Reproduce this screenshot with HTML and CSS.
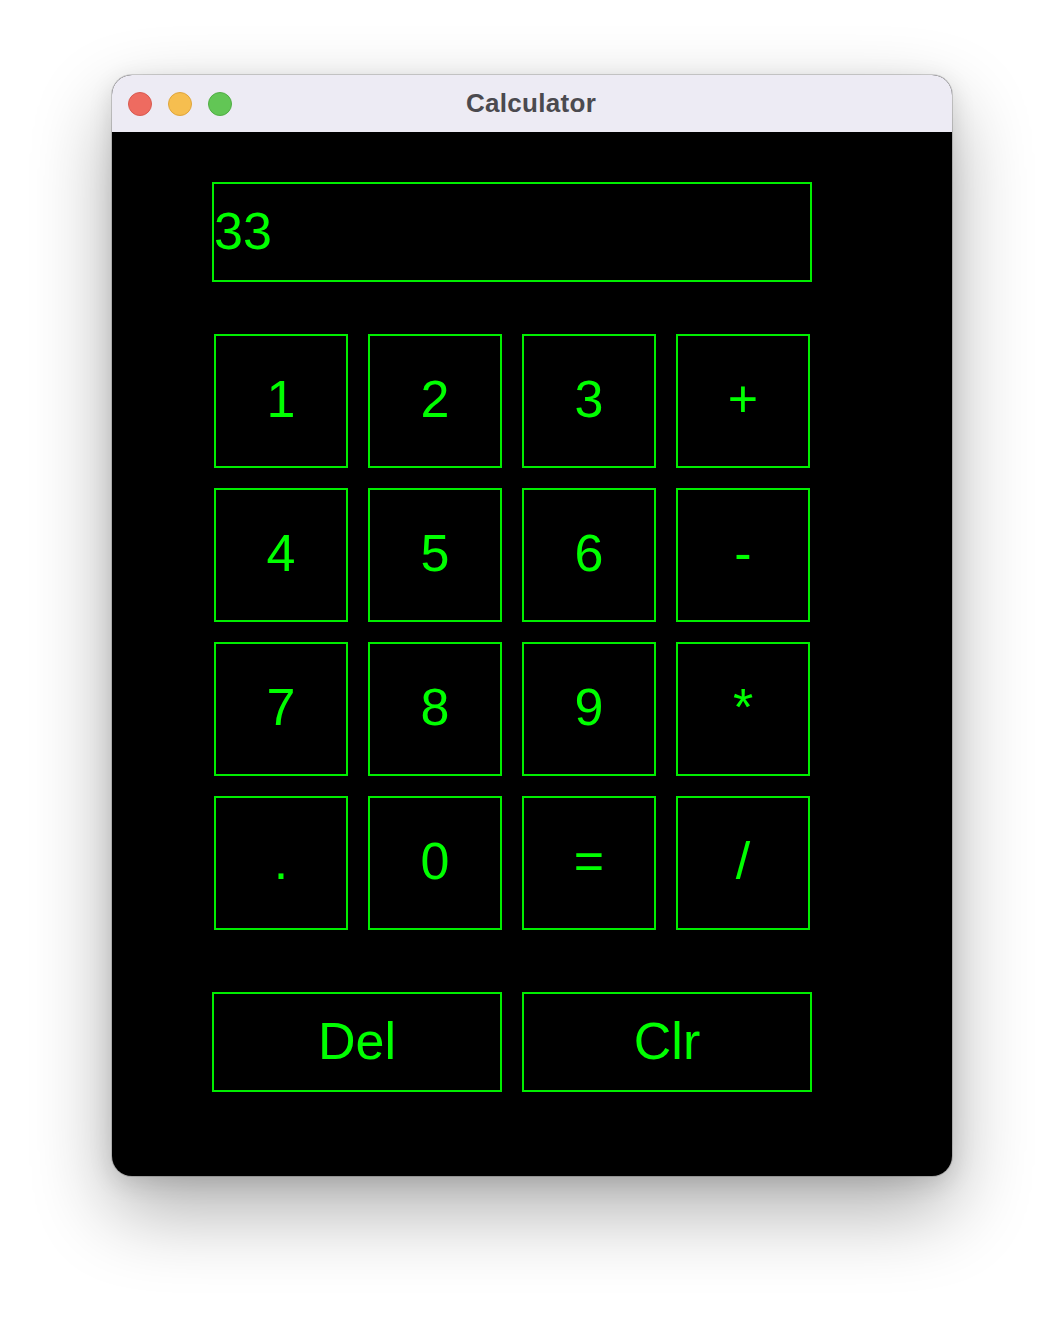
FILE: index.html
```html
<!DOCTYPE html>
<html>
<head>
<meta charset="utf-8">
<title>Calculator</title>
<link rel="stylesheet" href="styles.css">
</head>
<body>
<div class="window">
  <div class="titlebar">
    <div class="lights">
      <span class="light red"></span>
      <span class="light yellow"></span>
      <span class="light green"></span>
    </div>
    <div class="title">Calculator</div>
  </div>
  <div class="content">
    <div class="display">33</div>
    <div class="keys">
      <div class="key">1</div>
      <div class="key">2</div>
      <div class="key">3</div>
      <div class="key">+</div>
      <div class="key">4</div>
      <div class="key">5</div>
      <div class="key">6</div>
      <div class="key">-</div>
      <div class="key">7</div>
      <div class="key">8</div>
      <div class="key">9</div>
      <div class="key">*</div>
      <div class="key">.</div>
      <div class="key">0</div>
      <div class="key">=</div>
      <div class="key">/</div>
    </div>
    <div class="actions">
      <div class="action">Del</div>
      <div class="action">Clr</div>
    </div>
  </div>
</div>
</body>
</html>
```

FILE: styles.css
```css
html, body {
  margin: 0;
  padding: 0;
  background: #ffffff;
}

body {
  padding: 75px 0 0 112px;
  min-height: 1324px;
  box-sizing: border-box;
  font-family: "Liberation Sans", Arial, sans-serif;
}

.window {
  width: 840px;
  height: 1101px;
  border-radius: 20px;
  overflow: hidden;
  background: #000;
  box-shadow: 0 0 0 1px rgba(0, 0, 0, 0.16), 0 34px 80px rgba(0, 0, 0, 0.32), 0 6px 24px rgba(0, 0, 0, 0.12);
  display: flex;
  flex-direction: column;
}

.titlebar {
  height: 57px;
  flex: none;
  background: #edebf4;
  position: relative;
  display: flex;
  align-items: center;
  justify-content: center;
}

.lights {
  position: absolute;
  left: 16px;
  top: 17px;
  display: flex;
  gap: 16px;
}

.light {
  width: 24px;
  height: 24px;
  border-radius: 50%;
  box-sizing: border-box;
}

.light.red { background: #ee6b60; border: 1px solid #d85a50; }
.light.yellow { background: #f6be4f; border: 1px solid #dfa53c; }
.light.green { background: #62c655; border: 1px solid #51ad45; }

.title {
  font-weight: bold;
  font-size: 26px;
  letter-spacing: 0.3px;
  color: #4b4a4f;
  margin-left: -2px;
}

.content {
  flex: 1;
  padding: 50px 0 0 100px;
  display: flex;
  flex-direction: column;
}

.display {
  width: 600px;
  height: 100px;
  box-sizing: border-box;
  border: 2px solid #00ee00;
  color: #00ff00;
  font-size: 52px;
  display: flex;
  align-items: center;
  padding-bottom: 3px;
}

.keys {
  margin: 52px 0 0 2px;
  display: grid;
  grid-template-columns: repeat(4, 134px);
  grid-auto-rows: 134px;
  gap: 20px;
}

.key, .action {
  box-sizing: border-box;
  border: 2px solid #00ee00;
  color: #00ff00;
  font-size: 52px;
  display: flex;
  align-items: center;
  justify-content: center;
  padding-bottom: 4px;
}

.actions {
  margin-top: 62px;
  display: flex;
  gap: 20px;
}

.action {
  width: 290px;
  height: 100px;
  padding-bottom: 2px;
}
```
